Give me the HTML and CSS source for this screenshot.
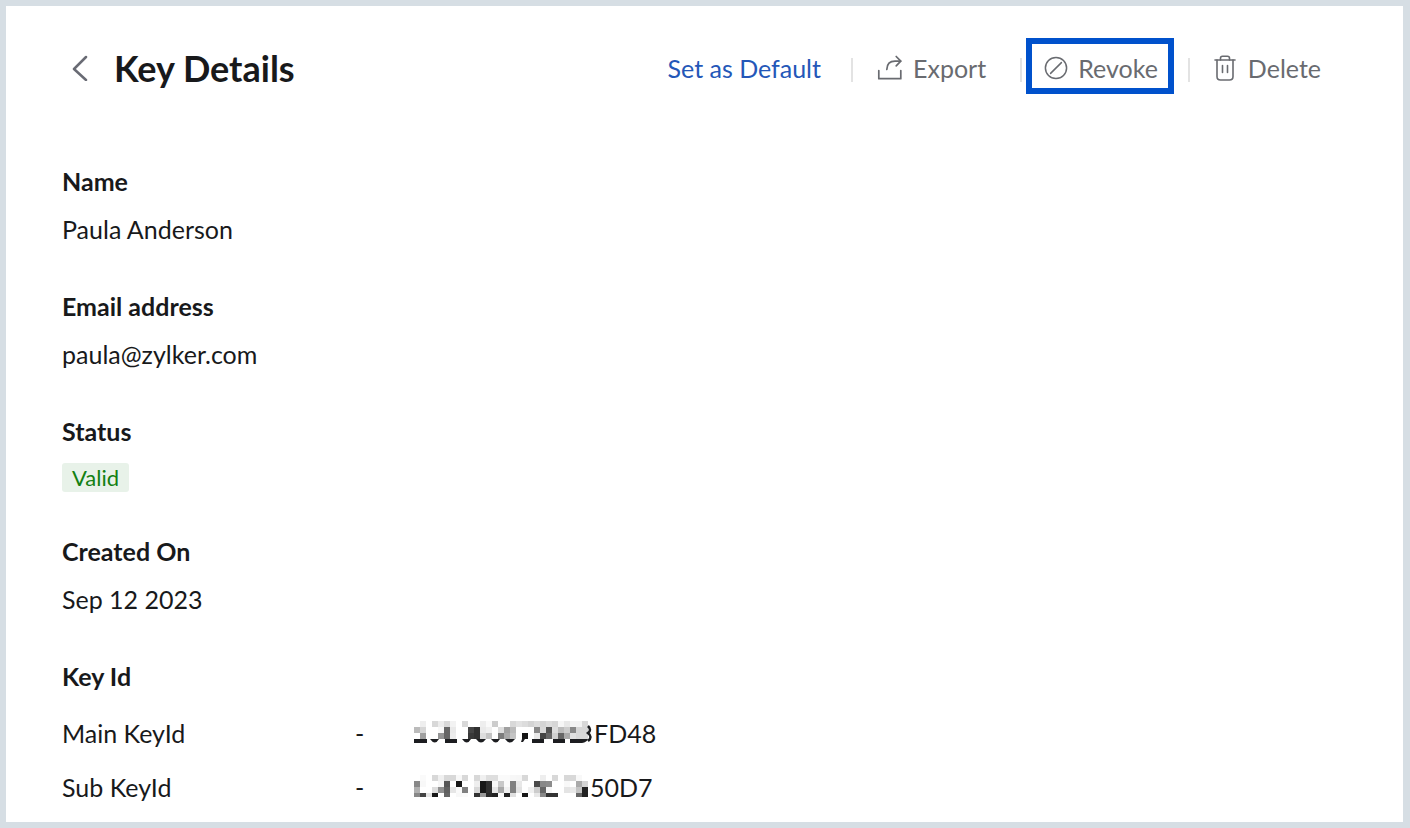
FILE: index.html
```html
<!DOCTYPE html>
<html lang="en">
<head>
    <meta charset="UTF-8">
    <meta name="viewport" content="width=device-width, initial-scale=1.0">
    <title>Key Details</title>
    <link rel="stylesheet" href="styles.css">
</head>
<body>
    <main class="panel">
        <header class="header">
            <button type="button" class="back" aria-label="Back">
                <svg width="16" height="26" viewBox="0 0 16 26" fill="none" stroke="#696b74" stroke-width="2.5" stroke-linecap="round" stroke-linejoin="round">
                    <path d="M14 2L2 14l12 11"/>
                </svg>
            </button>
            <h1>Key Details</h1>
            <div class="actions">
                <button type="button" class="action default">Set as Default</button>
                <span class="divider"></span>
                <button type="button" class="action export">
                    <svg width="26" height="26" viewBox="0 0 26 26" fill="none" stroke="#696b70" stroke-width="1.7" stroke-linecap="round" stroke-linejoin="round">
                        <path d="M1.8 15.5v8.2h22v-8.2"/>
                        <path d="M9.8 14.5C10 9 13 6.2 18 6.2h5.6"/>
                        <path d="M19.2 1.5l4.6 4.7-4.6 4.6"/>
                    </svg>
                    Export
                </button>
                <span class="divider"></span>
                <button type="button" class="action revoke">
                    <svg width="24" height="24" viewBox="0 0 24 24" fill="none" stroke="#696b70" stroke-width="1.5" stroke-linecap="round">
                        <circle cx="12" cy="12" r="10.6"/>
                        <path d="M6.6 17.4L17.4 6.6"/>
                    </svg>
                    Revoke
                </button>
                <span class="divider"></span>
                <button type="button" class="action delete">
                    <svg width="22" height="26" viewBox="0 0 22 26" fill="none" stroke="#696b70" stroke-width="1.6" stroke-linecap="round" stroke-linejoin="round">
                        <path d="M1 5h20"/>
                        <path d="M6.5 5V3.2Q6.5 1.2 8.5 1.2h5q2 0 2 2V5"/>
                        <path d="M3 5v16.5Q3 25 6.5 25h9Q19 25 19 21.5V5"/>
                        <path d="M8.5 10.5v7M13.5 10.5v7"/>
                    </svg>
                    Delete
                </button>
            </div>
        </header>

        <dl class="details">
            <div class="field">
                <dt>Name</dt>
                <dd>Paula Anderson</dd>
            </div>
            <div class="field">
                <dt>Email address</dt>
                <dd>paula@zylker.com</dd>
            </div>
            <div class="field status">
                <dt>Status</dt>
                <dd><span class="badge">Valid</span></dd>
            </div>
            <div class="field">
                <dt>Created On</dt>
                <dd>Sep 12 2023</dd>
            </div>
        </dl>

        <section class="keys">
            <h2>Key Id</h2>
            <table>
                <tr>
                    <th scope="row">Main KeyId</th>
                    <td class="dash">-</td>
                    <td>
                        <span class="key">
                            <svg id="mask-main" width="180" height="24" viewBox="0 0 180 24" aria-hidden="true">
                                <g class="cells" shape-rendering="crispEdges"></g>
                                <path fill="#1c1d20" d="M0 18h13v4H0zM31 18h12v4H31zM118 18h12v4h-12zM139 18h12v4h-12zM108 18h3l-2 3h-2z"/>
                                <path fill="#1c1d20" d="M16 18h9q-4 7-9 0zM48 18h9q-4 7-9 0zM62 18h10q-5 7-10 0zM77 18h9q-4 7-9 0zM91 18h10q-5 7-10 0z"/>
                                <path fill="#1c1d20" d="M156 18h12v4h-12zM168 18h6q-1 3-6 4z"/>
                                <path fill="none" stroke="#1c1d20" stroke-width="2.5" d="M174 5q4 4 0 7q5 4 0 8"/>
                            </svg>FD48
                        </span>
                    </td>
                </tr>
                <tr>
                    <th scope="row">Sub KeyId</th>
                    <td class="dash">-</td>
                    <td>
                        <span class="key">
                            <svg id="mask-sub" width="176" height="24" viewBox="0 0 176 24" aria-hidden="true">
                                <g class="cells" shape-rendering="crispEdges"></g>
                            </svg>50D7
                        </span>
                    </td>
                </tr>
            </table>
        </section>
    </main>

    <script>
    // Grey level of every masked cell, two hex digits each, one string per row
    const masks = {
        "mask-main": [
            "ff ee ff d8 ec d8 f2 ff d8 ff ff ee fa cc ff ff d8 e2 dc d4 dd d4 dd d6 f6 e8 f3 f3 d8",
            "bb d6 ff ff f8 66 e9 ff ff 44 30 ea f0 ff dd a0 bb ff ff ff 88 d8 55 dd bb cc 88 d6 d6",
            "ff a0 ff ff 95 66 ec ff ff 38 30 dd c4 ff 7c a8 c4 ff 14 ff e8 44 66 d0 66 aa e0 d8 d8"
        ],
        "mask-sub": [
            "ff fa ff d8 f0 d8 d8 f8 d8 ff d8 f0 de de fa fa f7 f6 d8 ff ff ee ff d8 ff d8 d8 f8 ff",
            "88 f8 ff ff f6 55 ff 18 ff ff ee 18 30 f8 c8 fa 80 e8 ff ff 4a 88 8c ff ff f8 ff aa d4",
            "b0 ff ff dd 90 60 e6 fa 80 ff d8 18 30 e6 a8 f0 80 e2 ff f0 cc 66 f6 ff ff e4 e8 c4 22",
            "88 44 e4 18 ff 66 ff f8 fa ff 33 99 2a 22 fa 22 e0 ff 18 ff e8 88 33 33 ff ff ff 66 22"
        ]
    };

    for (const id in masks) {
        let cells = "";
        masks[id].forEach((row, y) => {
            row.split(" ").forEach((level, x) => {
                const height = y === 3 ? 4 : 6;
                cells += `<rect x="${x * 6}" y="${y * 6}" width="6" height="${height}" fill="#${level.repeat(3)}"/>`;
            });
        });
        document.querySelector("#" + id + " .cells").innerHTML = cells;
    }
    </script>
</body>
</html>
```

FILE: styles.css
```css
* {
    box-sizing: border-box;
}
body {
    margin: 0;
    font-family: Lato, sans-serif;
    font-size: 25px;
    line-height: 32px;
    color: #18191b;
    background-color: #fff;
}
.panel {
    min-height: 100vh;
    padding: 32px 62px 0 56px;
    border: 6px solid #d6dee4;
    border-right-width: 7px;
    background-color: #fff;
}
.header {
    display: flex;
    align-items: center;
}
button {
    padding: 0;
    border: none;
    background: none;
    font: inherit;
    cursor: pointer;
}
.back {
    display: flex;
    padding: 4px 16px 0 10px;
}
h1 {
    margin: 4px 0 0 10px;
    font-size: 36px;
    line-height: 48px;
    font-weight: 700;
}
.actions {
    display: flex;
    align-items: center;
    margin-left: auto;
}
.action {
    display: flex;
    align-items: center;
    gap: 10px;
    height: 56px;
    padding-top: 4px;
    color: #696b70;
    white-space: nowrap;
}
.default {
    padding-right: 30px;
    color: #2457b8;
}
.divider {
    width: 2px;
    height: 24px;
    margin-top: 8px;
    background-color: #e3e3e3;
}
.export {
    padding-left: 24px;
    padding-right: 34px;
}
.revoke {
    margin: 0 14px 0 4px;
    padding-left: 12px;
    padding-right: 10px;
    border: 6px solid #0051cc;
}
.delete {
    padding-left: 24px;
    padding-right: 20px;
    gap: 12px;
}
.details {
    margin: 71px 0 0;
}
.field {
    margin-bottom: 45px;
}
dt,
h2 {
    margin: 0;
    font-size: 25px;
    line-height: 32px;
    font-weight: 700;
}
dd {
    margin: 16px 0 0;
}
.status {
    margin-bottom: 43px;
}
.badge {
    display: block;
    width: fit-content;
    padding: 0 10px;
    border-radius: 3px;
    background-color: #e8f2e9;
    color: #128012;
    font-size: 22px;
    line-height: 29px;
}
table {
    width: 100%;
    margin-top: 14px;
    border-collapse: collapse;
}
th,
td {
    height: 54px;
    padding: 0;
    text-align: left;
    font-weight: 400;
}
th {
    width: 293px;
}
.dash {
    width: 59px;
}
.key {
    display: flex;
    align-items: center;
}
```
